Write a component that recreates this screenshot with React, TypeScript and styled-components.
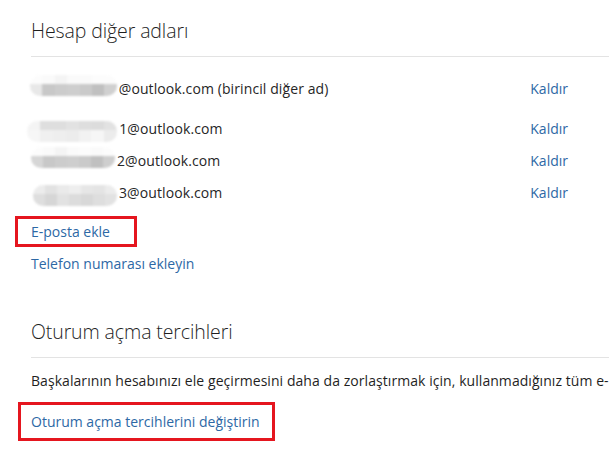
import styled, { createGlobalStyle } from 'styled-components';

const GlobalStyle = createGlobalStyle`
  html, body {
    margin: 0;
    background: #fff;
    overflow: hidden;
  }
  body {
    font-family: "Open Sans", "Noto Sans", "DejaVu Sans", sans-serif;
    color: #262626;
  }
`;

const Page = styled.div`
  width: 609px;
  height: 453px;
  overflow: hidden;
  padding-left: 31px;
  box-sizing: border-box;
`;

const Section = styled.section<{ $top: number }>`
  padding-top: ${p => p.$top}px;
`;

const Heading = styled.h2`
  margin: 0;
  font-size: 19.5px;
  font-weight: 300;
  line-height: 28px;
  color: #1f1f1f;
  letter-spacing: -0.1px;
`;

const Rule = styled.hr`
  margin: 11px 0 0;
  border: 0;
  border-top: 1px solid #e3e3e3;
  width: 600px;
`;

const AliasList = styled.div`
  width: 537px;
  margin-top: 20px;
  display: flex;
  flex-direction: column;
`;

const AliasRow = styled.div<{ $gap: number }>`
  display: flex;
  align-items: center;
  justify-content: space-between;
  height: 22px;
  margin-top: ${p => p.$gap}px;
  font-size: 14px;
`;

const Address = styled.span`
  display: flex;
  align-items: center;
  white-space: nowrap;
  letter-spacing: 0.1px;
`;

/* pixelated, blurred stand-in for the hidden part of each address */
const Mosaic = styled.span<{ $shift: number; $offset: number; $cell: number }>`
  display: grid;
  grid-auto-flow: column;
  grid-auto-columns: ${p => p.$cell}px;
  grid-template-rows: 9px 12px;
  margin-left: ${p => p.$offset}px;
  margin-right: 2px;
  transform: translateY(${p => p.$shift}px);
  border-radius: 10px;
  overflow: hidden;
  filter: blur(0.8px);
`;

const Cell = styled.span<{ $g: number }>`
  background: rgb(${p => p.$g}, ${p => p.$g}, ${p => p.$g});
`;

const Link = styled.a`
  color: #2d68a5;
  text-decoration: none;
  font-size: 14px;
  white-space: nowrap;
  cursor: pointer;
`;

const Actions = styled.div<{ $top: number }>`
  margin-top: ${p => p.$top}px;
  display: flex;
  flex-direction: column;
  align-items: flex-start;
`;

const Marked = styled.div<{ $left: number; $right: number; $padY: number }>`
  border: 3px solid #e5161f;
  padding: ${p => p.$padY}px ${p => p.$right}px ${p => p.$padY}px ${p => p.$left}px;
  margin-left: ${p => -(p.$left + 3)}px;
  line-height: 20px;
`;

const PlainAction = styled.div`
  margin-top: 6px;
  line-height: 20px;
`;

const Paragraph = styled.p`
  margin: 13px 0 0;
  font-size: 14px;
  line-height: 20px;
  white-space: nowrap;
  letter-spacing: 0.06px;
  color: #1f1f1f;
`;

const aliases = [
  {
    suffix: '@outlook.com (birincil diğer ad)', gap: 0, offset: -1, shift: -3, cell: 12.4,
    top: [252, 250, 244, 250, 250, 252, 252],
    bottom: [232, 200, 204, 206, 202, 192, 208],
  },
  {
    suffix: '1@outlook.com', gap: 18, offset: -4, shift: 3, cell: 12.9,
    top: [244, 222, 222, 226, 222, 220, 226],
    bottom: [246, 240, 238, 236, 242, 246, 236],
  },
  {
    suffix: '2@outlook.com', gap: 10, offset: 0, shift: -3, cell: 12,
    top: [252, 250, 244, 250, 252, 250, 252],
    bottom: [214, 200, 204, 206, 202, 192, 206],
  },
  {
    suffix: '3@outlook.com', gap: 10, offset: 2, shift: 3, cell: 12,
    top: [236, 226, 234, 238, 230, 228, 236],
    bottom: [222, 214, 226, 220, 216, 222, 226],
  },
];

export default function App() {
  return (
    <>
      <GlobalStyle />
      <Page>
        <Section $top={17}>
          <Heading>Hesap diğer adları</Heading>
          <Rule />
          <AliasList>
            {aliases.map(a => (
              <AliasRow key={a.suffix} $gap={a.gap}>
                <Address>
                  <Mosaic $shift={a.shift} $offset={a.offset} $cell={a.cell}>
                    {a.top.flatMap((g, i) => [
                      <Cell key={'t' + i} $g={g} />,
                      <Cell key={'b' + i} $g={a.bottom[i]} />,
                    ])}
                  </Mosaic>
                  {a.suffix}
                </Address>
                <Link>Kaldır</Link>
              </AliasRow>
            ))}
          </AliasList>
          <Actions $top={13}>
            <Marked $left={13} $right={24} $padY={2}>
              <Link>E-posta ekle</Link>
            </Marked>
            <PlainAction>
              <Link>Telefon numarası ekleyin</Link>
            </PlainAction>
          </Actions>
        </Section>
        <Section $top={44}>
          <Heading>Oturum açma tercihleri</Heading>
          <Rule />
          <Paragraph>
            Başkalarının hesabınızı ele geçirmesini daha da zorlaştırmak için, kullanmadığınız tüm e-posta adreslerini ve telefon numaralarını kapatın.
          </Paragraph>
          <Actions $top={11}>
            <Marked $left={10} $right={12} $padY={6}>
              <Link>Oturum açma tercihlerini değiştirin</Link>
            </Marked>
          </Actions>
        </Section>
      </Page>
    </>
  );
}
